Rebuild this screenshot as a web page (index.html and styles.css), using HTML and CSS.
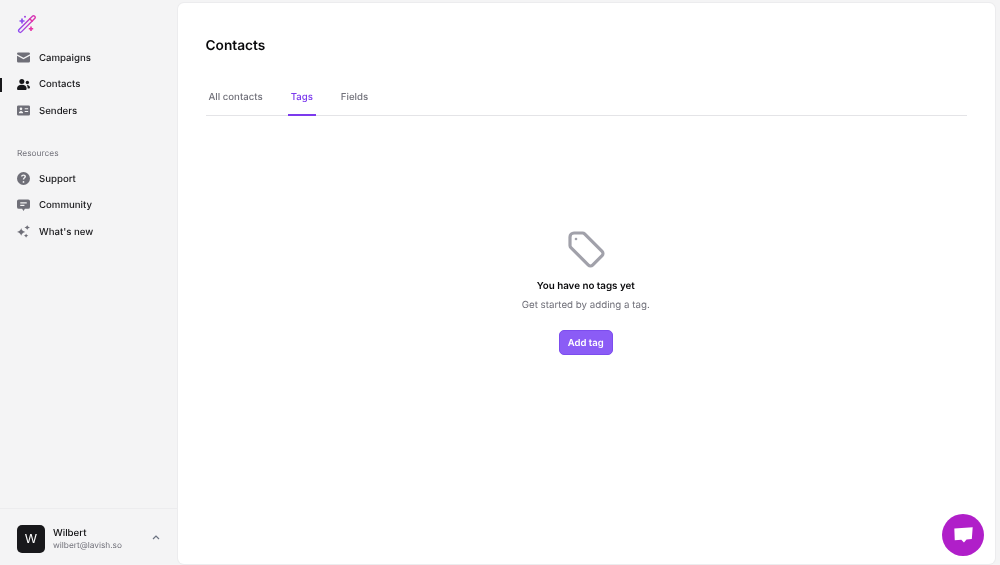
FILE: index.html
```html
<!DOCTYPE html>
<html lang="en">
<head>
<meta charset="utf-8">
<title>Contacts</title>
<link rel="stylesheet" href="styles.css">
</head>
<body>
<div class="app">
  <aside class="sidebar">
    <div class="logo">
      <svg width="20" height="20" viewBox="0 0 20 20" fill="none">
        <defs><linearGradient id="wand" x1="2" y1="18" x2="18" y2="2" gradientUnits="userSpaceOnUse"><stop offset="0" stop-color="#7c4dff"/><stop offset="1" stop-color="#ec2f9f"/></linearGradient></defs>
        <rect x="-1.6" y="-11" width="3.2" height="22" rx="1.6" transform="translate(9.9 9.1) rotate(45)" stroke="url(#wand)" stroke-width="1.4"/>
        <path d="M12.4 3.4l3.2 3.2" stroke="#ec2f9f" stroke-width="1.4"/>
        <path d="M5 3.5v5M2.5 6h5" stroke="#8b4df0" stroke-width="1.7"/>
        <path d="M14 11.5v4.5M11.8 13.8h4.4" stroke="#e635a8" stroke-width="1.6"/>
        <circle cx="8" cy="1.8" r="1" fill="#a044e0"/>
      </svg>
    </div>
    <nav class="nav">
      <a class="nav-item">
        <svg class="icon" viewBox="0 0 14 11"><path d="M1.500 0h11A1.500 1.500 0 0 1 14 1.500v.6L7 5.700 0 2.100V1.500A1.500 1.500 0 0 1 1.500 0z"/><path d="M0 3.700l7 3.600 7-3.600v5.800A1.500 1.500 0 0 1 12.500 11h-11A1.500 1.500 0 0 1 0 9.500z"/></svg>
        <span>Campaigns</span>
      </a>
      <a class="nav-item is-active">
        <svg class="icon icon-dark" viewBox="0 0 14 12"><circle cx="5.200" cy="2.700" r="2.700"/><path d="M0 10.500C0 8 2 6.300 5.200 6.300s5.200 1.700 5.200 4.200c0 .9-.6 1.500-1.500 1.500H1.500C.6 12 0 11.400 0 10.500z"/><circle cx="11.200" cy="3.800" r="1.800"/><path d="M10.500 6.500c2 0 3.500 1 3.500 2.700 0 .6-.4 1-1 1h-1.500c0-1.500-.3-2.700-1-3.700z"/></svg>
        <span>Contacts</span>
      </a>
      <a class="nav-item">
        <svg class="icon" viewBox="0 0 14 11"><path fill-rule="evenodd" d="M1.500 0h11A1.500 1.500 0 0 1 14 1.500v8a1.500 1.500 0 0 1-1.500 1.500h-11A1.500 1.500 0 0 1 0 9.500v-8A1.500 1.500 0 0 1 1.500 0zM4.300 2.300a1.400 1.400 0 1 0 0 2.800 1.400 1.400 0 0 0 0-2.800zM2 8.500h4.600c0-1.500-1-2.500-2.300-2.500S2 7 2 8.500zM8.300 3v1.200H12V3zM8.300 6v1.200H12V6z"/></svg>
        <span>Senders</span>
      </a>
    </nav>
    <div class="section-label">Resources</div>
    <nav class="nav">
      <a class="nav-item">
        <svg class="icon icon-round" viewBox="0 0 12 12"><path fill-rule="evenodd" d="M6 0a6 6 0 1 1 0 12A6 6 0 0 1 6 0zM6 8.400a.8.800 0 1 0 0 1.600.8.800 0 0 0 0-1.600zM6 2.300c-1.300 0-2.200.8-2.300 1.900h1.300c.1-.5.400-.8 1-.8.500 0 .9.300.9.800 0 .4-.2.600-.7 1-.6.400-.8.800-.8 1.500v.2h1.300v-.2c0-.4.100-.6.600-.9.600-.5 1-1 1-1.700 0-1.100-1-1.800-2.300-1.800z"/></svg>
        <span>Support</span>
      </a>
      <a class="nav-item">
        <svg class="icon icon-chat" viewBox="0 0 14 13"><path fill-rule="evenodd" d="M2 0h10a2 2 0 0 1 2 2v6a2 2 0 0 1-2 2H8.500L7 12.500 5.500 10H2a2 2 0 0 1-2-2V2a2 2 0 0 1 2-2zM3.500 3v1.300h7V3zM3.500 5.700V7h4.500V5.700z"/></svg>
        <span>Community</span>
      </a>
      <a class="nav-item">
        <svg class="icon icon-spark" viewBox="0 0 14 14"><path d="M4.500 3.300C5 5.600 6.200 6.800 9 7.500 6.200 8.200 5 9.400 4.500 11.700 4 9.400 2.800 8.200 0 7.500 2.800 6.800 4 5.600 4.500 3.300z"/><path d="M11 0c.3 1.400 1 2.100 3 2.800-2 .6-2.700 1.300-3 2.800-.3-1.500-1-2.200-3-2.800 2-.7 2.700-1.400 3-2.800z"/><path d="M9.800 9.200c.2 1.100.8 1.700 2.400 2.300-1.600.5-2.200 1.100-2.400 2.300-.2-1.200-.8-1.800-2.400-2.300 1.600-.6 2.200-1.200 2.400-2.300z"/></svg>
        <span>What's new</span>
      </a>
    </nav>
    <div class="account">
      <div class="avatar">W</div>
      <div class="account-text">
        <div class="account-name">Wilbert</div>
        <div class="account-mail">wilbert@lavish.so</div>
      </div>
      <svg class="chevron" width="8" height="5" viewBox="0 0 8 5" fill="none"><path d="M1 4l3-3 3 3" stroke="#6b7280" stroke-width="1.200"/></svg>
    </div>
  </aside>
  <main class="panel">
    <h1 class="title">Contacts</h1>
    <div class="tabs">
      <a class="tab">All contacts</a>
      <a class="tab is-current">Tags</a>
      <a class="tab">Fields</a>
    </div>
    <section class="empty">
      <svg class="tag-icon" width="38" height="38" viewBox="0 0 38 38" fill="none">
        <path d="M2 6a4 4 0 0 1 4-4h8.500a3 3 0 0 1 2.100.9l17.500 17.500a3 3 0 0 1 0 4.200L24.600 34.100a3 3 0 0 1-4.200 0L2.900 16.600a3 3 0 0 1-.9-2.100z" stroke="#a1a1aa" stroke-width="3.200" stroke-linejoin="round"/>
        <circle cx="8" cy="8" r="1.300" fill="#a1a1aa"/>
      </svg>
      <h2 class="empty-title">You have no tags yet</h2>
      <p class="empty-text">Get started by adding a tag.</p>
      <button class="add-btn" type="button">Add tag</button>
    </section>
    <button class="chat-btn" type="button" aria-label="Chat">
      <svg width="21" height="18" viewBox="0 0 24 20"><path d="M1.500 2.500L22.500 1l-1 13.500-6 .5-3 3.500-3-3-7.500.5z" fill="#fff"/></svg>
    </button>
  </main>
</div>
</body>
</html>
```

FILE: styles.css
```css
* { box-sizing: border-box; }
html, body { margin: 0; height: 100%; }
body {
  background: #f4f4f5;
  font-family: Inter, "Liberation Sans", sans-serif;
  color: #111113;
  overflow: hidden;
  text-rendering: geometricPrecision;
}
.app { display: flex; height: 565px; }
.sidebar {
  width: 178px;
  flex: none;
  display: flex;
  flex-direction: column;
  padding-top: 15px;
  will-change: transform;
}
.logo { height: 20px; margin-left: 17px; margin-bottom: 10.300px; }
.logo svg { display: block; }
.nav { display: flex; flex-direction: column; }
.nav-item {
  position: relative;
  display: flex;
  align-items: center;
  height: 26.400px;
  padding-left: 17px;
  gap: 9px;
  font-size: 9.650px;
  line-height: 13px;
  font-weight: 500;
  color: #18181b;
}
.nav-item span { padding-top: 1px; margin-top: -1px; }
.nav-item.is-active::before {
  content: "";
  position: absolute;
  left: 0;
  top: 6px;
  width: 2px;
  height: 14px;
  background: #18181b;
}
.icon { width: 13px; height: 13px; fill: #6f6f78; flex: none; margin-top: -1px; }
.icon-dark { fill: #18181b; }
.section-label {
  margin: 22.700px 0 5px 17px;
  height: 14px;
  line-height: 14px;
  font-size: 8.400px;
  color: #71717a;
}
.account {
  margin-top: auto;
  height: 57px;
  border-top: 1px solid #ececee;
  display: flex;
  align-items: center;
  padding: 4px 18px 0 17px;
}
.avatar {
  width: 28px;
  height: 28px;
  border-radius: 5px;
  background: #18181b;
  color: #fff;
  font-size: 12.500px;
  font-weight: 400;
  display: flex;
  align-items: center;
  justify-content: center;
  flex: none;
}
.account-text { margin-left: 8px; flex: 1; min-width: 0; padding-top: 1px; }
.account-name { font-size: 9.700px; font-weight: 500; line-height: 14px; }
.account-mail { font-size: 8.300px; line-height: 12px; margin-top: -0.500px; color: #71717a; }
.chevron { margin-top: -3px; }
.panel {
  position: relative;
  flex: 1;
  margin: 3px 5px 1px 0;
  background: #fff;
  border-radius: 6px;
  box-shadow: 0 0 0 1px #ececee;
  padding: 35px 28px 0 27.500px;
  display: flex;
  flex-direction: column;
  will-change: transform;
}
.title {
  margin: 0;
  font-size: 13.700px;
  line-height: 17px;
  font-weight: 600;
  color: #09090b;
}
.tabs {
  display: flex;
  gap: 22px;
  margin-top: 24px;
  border-bottom: 1px solid #e4e4e7;
  height: 37px;
}
.tab {
  padding: 1px 3px 0;
  height: 37px;
  margin-bottom: -1px;
  line-height: 36px;
  font-size: 9.650px;
  font-weight: 500;
  color: #71717a;
  border-bottom: 2px solid transparent;
}
.tab.is-current { color: #7c3aed; border-bottom-color: #7c3aed; }
.empty {
  display: flex;
  flex-direction: column;
  align-items: center;
  margin-top: 115px;
  padding-right: 1px;
}
.tag-icon { display: block; margin-left: 2px; }
.empty-title {
  margin: 11px 0 0;
  font-size: 9.800px;
  line-height: 14px;
  font-weight: 600;
  color: #09090b;
}
.empty-text {
  margin: 5px 0 0;
  font-size: 9.750px;
  line-height: 14px;
  color: #71717a;
}
.add-btn {
  margin-top: 17px;
  width: 54px;
  height: 25px;
  padding: 1px 0 0;
  border: 1px solid #7c4dee;
  border-radius: 5px;
  background: #8b5cf6;
  color: #fff;
  font-family: inherit;
  font-size: 9.500px;
  font-weight: 600;
  text-rendering: geometricPrecision;
}
.chat-btn {
  position: absolute;
  right: 11px;
  bottom: 8px;
  width: 42px;
  height: 42px;
  border: 0;
  padding: 0;
  border-radius: 50%;
  background: #b01fc9;
  display: flex;
  align-items: center;
  justify-content: center;
}
```
